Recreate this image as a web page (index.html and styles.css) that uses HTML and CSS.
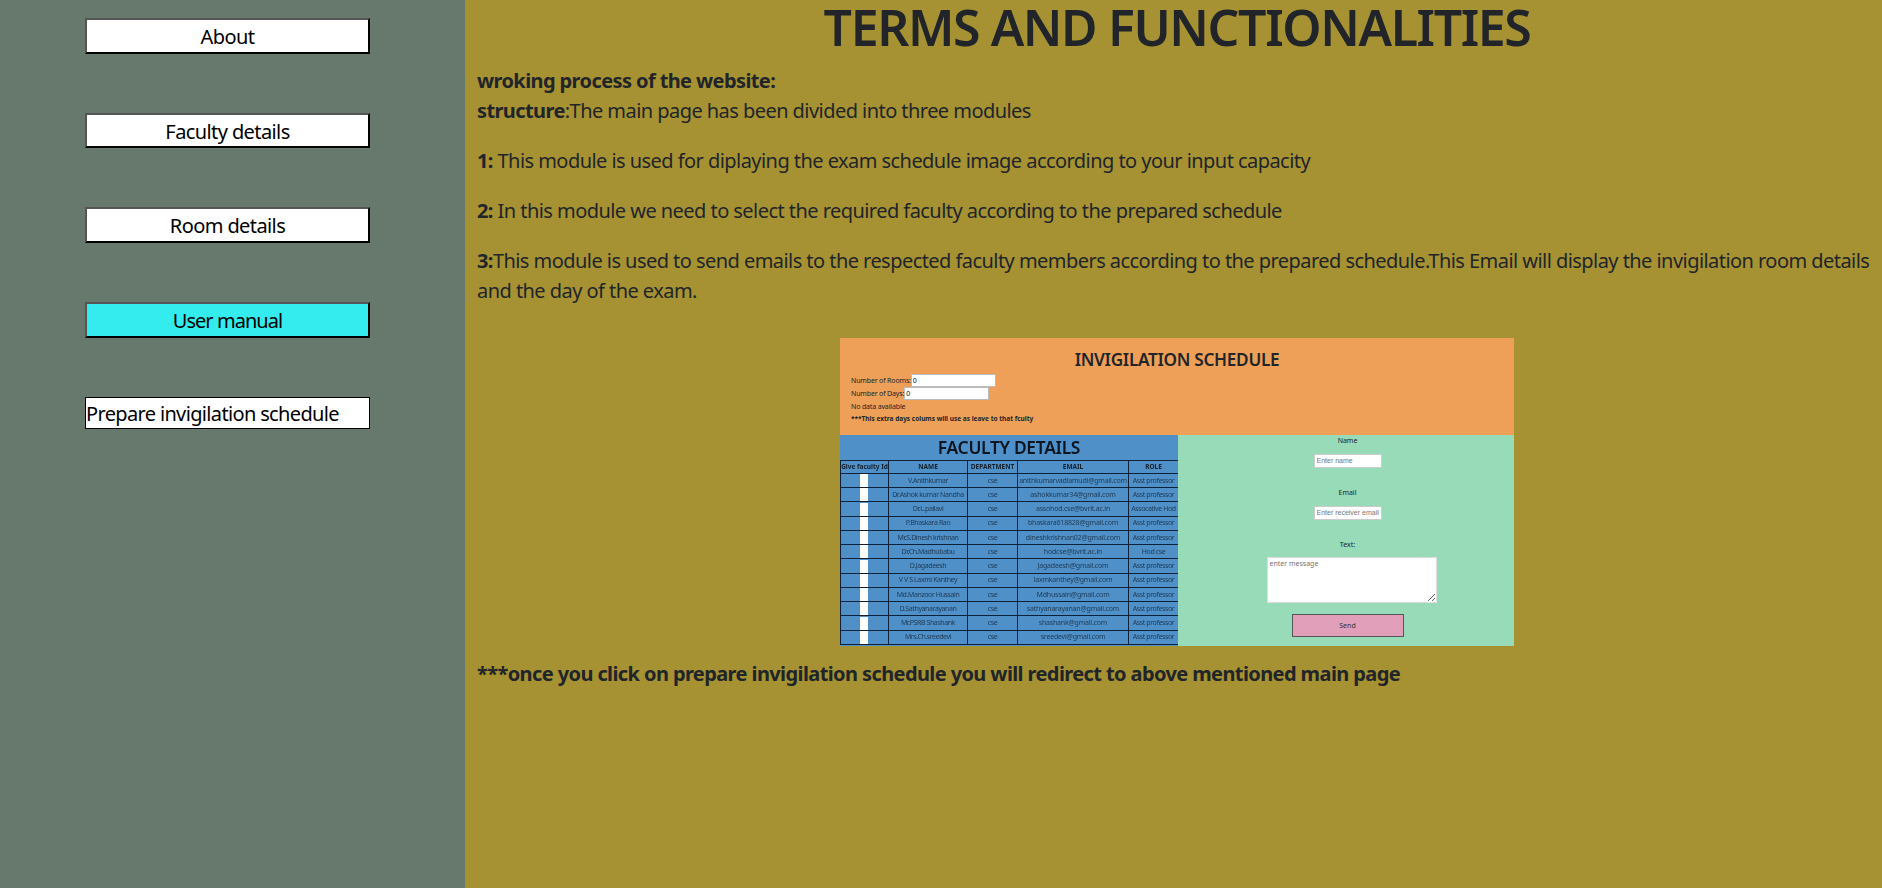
FILE: index.html
```html
<!DOCTYPE html>
<html lang="en">
<head>
    <meta charset="UTF-8">
    <meta name="viewport" content="width=device-width, initial-scale=1.0">
    <title>Terms and functionalities</title>
    <link rel="stylesheet" href="styles.css">
</head>
<body>
    <div class="sidebar">
        <button class="side-btn">About</button>
        <button class="side-btn">Faculty details</button>
        <button class="side-btn">Room details</button>
        <button class="side-btn active">User manual</button>
        <a class="side-link" href="#">Prepare invigilation schedule</a>
    </div>
    <div class="content">
        <h1>TERMS AND FUNCTIONALITIES</h1>
        <p><b>wroking process of the website:</b><br><b>structure</b>:The main page has been divided into three modules</p>
        <p><b>1:</b> This module is used for diplaying the exam schedule image according to your input capacity</p>
        <p><b>2:</b> In this module we need to select the required faculty according to the prepared schedule</p>
        <p><b>3:</b>This module is used to send emails to the respected faculty members according to the prepared schedule.This Email will display the invigilation room details and the day of the exam.</p>

        <div class="shot">
            <div class="shot-top">
                <h2>INVIGILATION SCHEDULE</h2>
                <div class="shot-row">Number of Rooms:<input type="text" value="0" class="num-input"></div>
                <div class="shot-row">Number of Days:<input type="text" value="0" class="num-input"></div>
                <div class="shot-row">No data available</div>
                <div class="shot-note"><b>***This extra days colums will use as leave to that fculty</b></div>
            </div>
            <div class="shot-bottom">
                <div class="shot-faculty">
                    <h3>FACULTY DETAILS</h3>
                    <table>
                        <colgroup>
                            <col class="c-id"><col class="c-name"><col class="c-dept"><col class="c-mail"><col class="c-role">
                        </colgroup>
                        <tr class="head-row"><th>Give faculty Id</th><th>NAME</th><th>DEPARTMENT</th><th>EMAIL</th><th>ROLE</th></tr>
                        <tr><td><span class="id-box"></span></td><td>V.Anithkumar</td><td>cse</td><td>anithkumarvadlamudi@gmail.com</td><td>Asst professor</td></tr>
                        <tr><td><span class="id-box"></span></td><td>Dr.Ashok kumar Nandha</td><td>cse</td><td>ashokkumar34@gmail.com</td><td>Asst professor</td></tr>
                        <tr><td><span class="id-box"></span></td><td>Dr.L.pallavi</td><td>cse</td><td>assohod.cse@bvrit.ac.in</td><td>Assocative Hod</td></tr>
                        <tr><td><span class="id-box"></span></td><td>P.Bhaskara Rao</td><td>cse</td><td>bhaskara618828@gmail.com</td><td>Asst professor</td></tr>
                        <tr><td><span class="id-box"></span></td><td>Mr.S.Dinesh krishnan</td><td>cse</td><td>dineshkrishnan02@gmail.com</td><td>Asst professor</td></tr>
                        <tr><td><span class="id-box"></span></td><td>Dr.Ch.Madhubabu</td><td>cse</td><td>hodcse@bvrit.ac.in</td><td>Hod cse</td></tr>
                        <tr><td><span class="id-box"></span></td><td>D.Jagadeesh</td><td>cse</td><td>Jagadeesh@gmail.com</td><td>Asst professor</td></tr>
                        <tr><td><span class="id-box"></span></td><td>V V S Laxmi Kanthey</td><td>cse</td><td>laxmkanthey@gmail.com</td><td>Asst professor</td></tr>
                        <tr><td><span class="id-box"></span></td><td>Md.Manzoor Hussain</td><td>cse</td><td>Mdhussain@gmail.com</td><td>Asst professor</td></tr>
                        <tr><td><span class="id-box"></span></td><td>D.Sathyanarayanan</td><td>cse</td><td>sathyanarayanan@gmail.com</td><td>Asst professor</td></tr>
                        <tr><td><span class="id-box"></span></td><td>Mr.PSRB Shashank</td><td>cse</td><td>shashank@gmail.com</td><td>Asst professor</td></tr>
                        <tr><td><span class="id-box"></span></td><td>Mrs.Ch.sreedevi</td><td>cse</td><td>sreedevi@gmail.com</td><td>Asst professor</td></tr>
                    </table>
                </div>
                <div class="shot-mail">
                    <label>Name</label>
                    <input type="text" placeholder="Enter name">
                    <label>Email</label>
                    <input type="text" placeholder="Enter receiver email">
                    <label>Text:</label>
                    <textarea placeholder="enter message"></textarea>
                    <button>Send</button>
                </div>
            </div>
        </div>

        <p class="last"><b>***once you click on prepare invigilation schedule you will redirect to above mentioned main page</b></p>
    </div>
</body>
</html>
```

FILE: styles.css
```css
html, body {
    margin: 0;
    padding: 0;
    height: 100%;
}

body {
    display: flex;
    font-family: "Noto Sans", "Open Sans", sans-serif;
    font-size: 20px;
    line-height: 30px;
    color: #212529;
    overflow: hidden;
}

.sidebar {
    width: 465px;
    flex-shrink: 0;
    background-color: #67796c;
    display: flex;
    flex-direction: column;
    align-items: flex-start;
    padding: 18px 0 0 85px;
    box-sizing: border-box;
    gap: 59px;
}

.side-btn {
    width: 285px;
    height: 35.7px;
    padding: 1px 0 0;
    background-color: white;
    border: 2px outset #555;
    border-color: #555 #000 #000 #555;
    font-family: inherit;
    font-size: 20px;
    letter-spacing: -0.6px;
    color: black;
}

.side-btn.active {
    background-color: #34ebee;
    letter-spacing: -0.95px;
}

.side-link {
    width: 285px;
    height: 32px;
    line-height: 32px;
    background-color: white;
    border: 1px solid black;
    box-sizing: border-box;
    color: black;
    text-decoration: none;
    letter-spacing: -0.65px;
}

.content {
    flex: 1;
    background-color: #a69232;
    padding: 0 5px 0 12px;
    box-sizing: border-box;
    letter-spacing: -0.55px;
}

.content b {
    letter-spacing: -0.6px;
}

h1 {
    margin: 0 0 11.6px;
    font-size: 50px;
    font-weight: 600;
    line-height: 54px;
    text-align: center;
    letter-spacing: -1.4px;
}

p {
    margin: 0 0 20px;
}

.shot {
    width: 674px;
    height: 308px;
    margin: 32px auto 0;
    letter-spacing: 0;
    display: flex;
    flex-direction: column;
    font-size: 7px;
    line-height: 12.5px;
    filter: blur(0.3px);
}

.shot b {
    letter-spacing: 0;
}

.shot-top {
    height: 97px;
    flex-shrink: 0;
    background-color: #eea058;
    padding: 0 0 0 11px;
    box-sizing: border-box;
}

.shot-top h2 {
    margin: 0 0 0 -11px;
    padding: 10px 0 0;
    font-size: 17.2px;
    font-weight: 600;
    line-height: 24px;
    letter-spacing: -0.3px;
    text-align: center;
}

.shot-row {
    height: 13px;
    letter-spacing: -0.15px;
    padding-top: 1px;
    box-sizing: border-box;
}

.shot-row input {
    width: 85px;
    height: 13px;
    font-size: 7px;
    padding: 0 1px;
    border: 1px solid #bbb;
    box-sizing: border-box;
    vertical-align: middle;
    position: relative;
    top: -1px;
}

.shot-row:nth-child(2) {
    margin-top: 2px;
}

.shot-note {
    font-size: 6.5px;
}

.shot-bottom {
    flex: 1;
    display: flex;
    min-height: 0;
}

.shot-faculty {
    width: 338px;
    background-color: #4f90c8;
}

.shot-faculty h3 {
    margin: 0;
    height: 25px;
    font-size: 17.4px;
    font-weight: 600;
    line-height: 25px;
    letter-spacing: -0.3px;
    text-align: center;
    color: #0c1520;
}

table {
    width: 338px;
    table-layout: fixed;
    border-collapse: collapse;
    font-size: 7px;
    line-height: 10px;
}

tr {
    height: 14.25px;
}

.head-row {
    height: 13.3px;
}

.c-id { width: 48px; }
.c-name { width: 79px; }
.c-dept { width: 50px; }
.c-mail { width: 111px; }
.c-role { width: 50px; }

th, td {
    border: 1px solid #0d2238;
    padding: 0;
    text-align: center;
    white-space: nowrap;
    overflow: hidden;
    color: #1f3a55;
    letter-spacing: -0.4px;
}

td:nth-child(4) {
    letter-spacing: -0.2px;
}

th {
    color: #14202c;
    font-size: 6.5px;
    letter-spacing: 0;
}

.id-box {
    display: block;
    width: 8px;
    height: 13px;
    margin: 0 0 0 19px;
    background-color: white;
}

.shot-mail {
    flex: 1;
    background-color: #98dbb9;
    display: flex;
    flex-direction: column;
    align-items: center;
    padding-left: 3px;
    font-size: 7px;
}

.shot-mail label {
    height: 12px;
}

.shot-mail input {
    width: 68px;
    height: 14px;
    margin: 7px 0 19px;
    border: 1px solid #ccc;
    padding: 0 2px;
    font-size: 7px;
    box-sizing: border-box;
}

.shot-mail textarea {
    width: 170px;
    height: 46px;
    margin: 6px 0 11px 8px;
    padding: 1px 2px;
    border: 1px solid #ddd;
    font-family: inherit;
    font-size: 7px;
    box-sizing: border-box;
}

.shot-mail button {
    width: 112px;
    height: 23px;
    padding: 0;
    background-color: #e29fb9;
    border: 1px solid #555;
    font-family: inherit;
    font-size: 7px;
    color: #333;
}

.last {
    margin-top: 13px;
}
```
